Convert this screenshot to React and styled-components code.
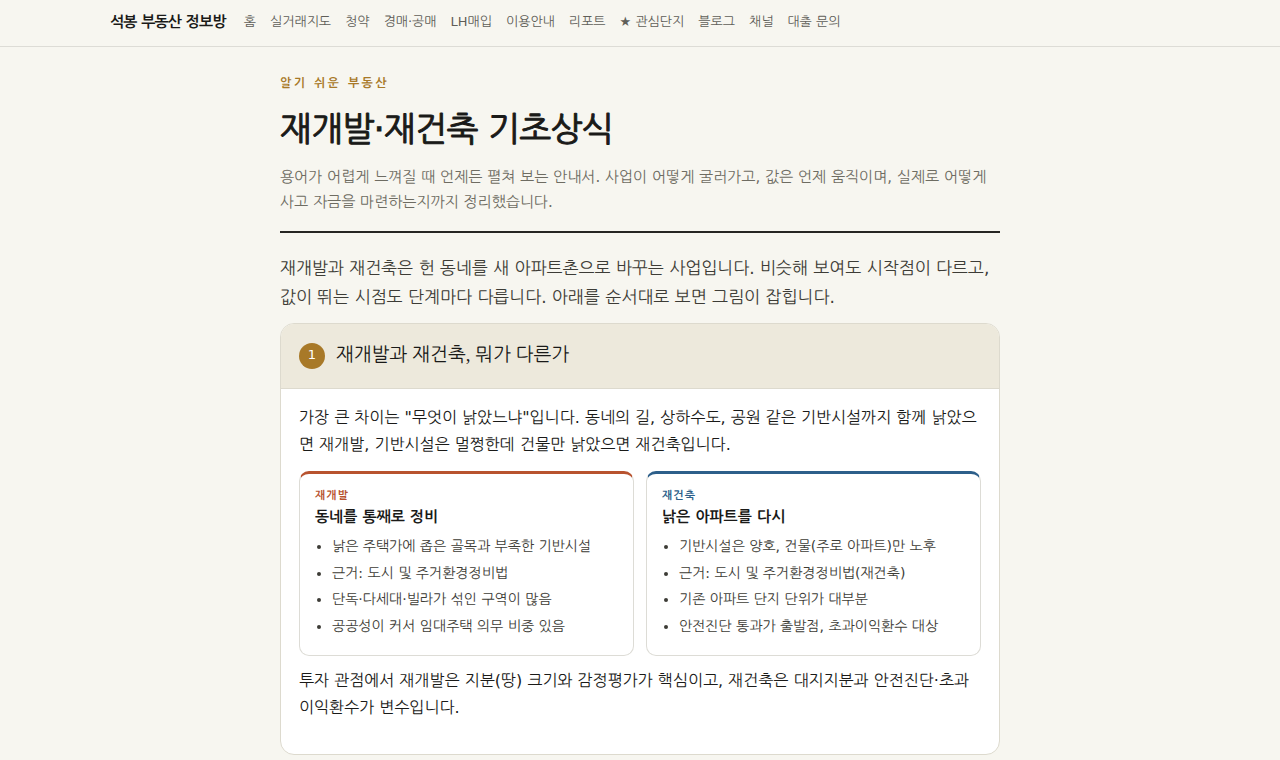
import styled, { createGlobalStyle } from "styled-components";

const links = [
  "홈",
  "실거래지도",
  "청약",
  "경매·공매",
  "LH매입",
  "이용안내",
  "리포트",
  "★ 관심단지",
  "블로그",
  "채널",
  "대출 문의",
];

const types = [
  {
    tag: "재개발",
    color: "#b8532f",
    title: "동네를 통째로 정비",
    items: [
      "낡은 주택가에 좁은 골목과 부족한 기반시설",
      "근거: 도시 및 주거환경정비법",
      "단독·다세대·빌라가 섞인 구역이 많음",
      "공공성이 커서 임대주택 의무 비중 있음",
    ],
  },
  {
    tag: "재건축",
    color: "#2d5f8a",
    title: "낡은 아파트를 다시",
    items: [
      "기반시설은 양호, 건물(주로 아파트)만 노후",
      "근거: 도시 및 주거환경정비법(재건축)",
      "기존 아파트 단지 단위가 대부분",
      "안전진단 통과가 출발점, 초과이익환수 대상",
    ],
  },
];

function TypeBox({ tag, color, title, items }) {
  return (
    <Box $color={color}>
      <Tag $color={color}>{tag}</Tag>
      <BoxTitle>{title}</BoxTitle>
      <List>
        {items.map((item) => (
          <li key={item}>{item}</li>
        ))}
      </List>
    </Box>
  );
}

function App() {
  return (
    <>
      <GlobalStyle />
      <Header>
        <Nav>
          <Brand href="#">석봉 부동산 정보방</Brand>
          {links.map((link) => (
            <NavLink href="#" key={link}>
              {link}
            </NavLink>
          ))}
        </Nav>
      </Header>
      <Main>
        <Hero>
          <Eyebrow>알기 쉬운 부동산</Eyebrow>
          <Title>재개발·재건축 기초상식</Title>
          <Subtitle>
            용어가 어렵게 느껴질 때 언제든 펼쳐 보는 안내서. 사업이 어떻게
            굴러가고, 값은 언제 움직이며, 실제로 어떻게 사고 자금을
            마련하는지까지 정리했습니다.
          </Subtitle>
        </Hero>
        <Lead>
          재개발과 재건축은 헌 동네를 새 아파트촌으로 바꾸는 사업입니다. 비슷해
          보여도 시작점이 다르고, 값이 뛰는 시점도 단계마다 다릅니다. 아래를
          순서대로 보면 그림이 잡힙니다.
        </Lead>
        <Card>
          <CardHead>
            <Number>1</Number>
            <CardTitle>재개발과 재건축, 뭐가 다른가</CardTitle>
          </CardHead>
          <CardBody>
            <Text>
              가장 큰 차이는 "무엇이 낡았느냐"입니다. 동네의 길, 상하수도, 공원
              같은 기반시설까지 함께 낡았으면 재개발, 기반시설은 멀쩡한데 건물만
              낡았으면 재건축입니다.
            </Text>
            <Grid>
              {types.map((type) => (
                <TypeBox key={type.tag} {...type} />
              ))}
            </Grid>
            <Text>
              투자 관점에서 재개발은 지분(땅) 크기와 감정평가가 핵심이고,
              재건축은 대지지분과 안전진단·초과이익환수가 변수입니다.
            </Text>
          </CardBody>
        </Card>
      </Main>
    </>
  );
}

const GlobalStyle = createGlobalStyle`
  * {
    box-sizing: border-box;
    margin: 0;
    padding: 0;
  }

  body {
    background: #f7f6f0;
    color: #1a1a18;
    font-family: "DejaVu Sans", "NanumGothic", "Noto Sans CJK KR", sans-serif;
    font-size: 16px;
    line-height: 27px;
  }
`;

const Header = styled.header`
  border-bottom: 1px solid #dddcd6;
`;

const Nav = styled.nav`
  display: flex;
  flex-wrap: wrap;
  align-items: center;
  gap: 4px 14px;
  max-width: 1100px;
  margin: 0 auto;
  padding: 10px 20px 11px;
`;

const Brand = styled.a`
  margin-right: 4px;
  color: #1a1a18;
  font-size: 15px;
  line-height: 25px;
  font-weight: 700;
  letter-spacing: -0.05em;
  text-decoration: none;
`;

const NavLink = styled.a`
  padding-bottom: 2px;
  color: #5f5e58;
  font-size: 13px;
  line-height: 22px;
  text-decoration: none;
`;

const Main = styled.main`
  max-width: 760px;
  margin: 0 auto;
  padding: 24px 20px 60px;
`;

const Hero = styled.div`
  padding-bottom: 16px;
  border-bottom: 2px solid #262623;
`;

const Eyebrow = styled.p`
  color: #a87928;
  font-size: 12px;
  line-height: 24px;
  font-weight: 700;
  letter-spacing: 0.2em;
`;

const Title = styled.h1`
  margin: 9px 0 11px;
  font-size: 34px;
  line-height: 50px;
  font-weight: 400;
  letter-spacing: -0.02em;
  -webkit-text-stroke: 1px currentColor;
`;

const Subtitle = styled.p`
  color: #6e6c62;
  font-size: 15px;
  line-height: 25px;
`;

const Lead = styled.p`
  margin: 21px 0 11px;
  color: #3d3c36;
  font-size: 17px;
  line-height: 29px;
`;

const Card = styled.section`
  overflow: hidden;
  background: #fff;
  border: 1px solid #dddace;
  border-radius: 14px;
`;

const CardHead = styled.div`
  display: flex;
  align-items: center;
  gap: 11px;
  padding: 16px 18px;
  background: #ede9dc;
  border-bottom: 1px solid #dddace;
`;

const Number = styled.span`
  display: flex;
  align-items: center;
  justify-content: center;
  flex-shrink: 0;
  width: 26px;
  height: 26px;
  padding-bottom: 3px;
  border-radius: 50%;
  background: #a87928;
  color: #fff;
  font-size: 13px;
`;

const CardTitle = styled.h2`
  padding-bottom: 2px;
  font-family: "Liberation Serif", "NanumGothic", "Noto Sans CJK KR", serif;
  font-size: 19px;
  line-height: 30px;
  font-weight: 400;
`;

const CardBody = styled.div`
  padding: 15px 18px 33px;
`;

const Text = styled.p`
  font-size: 16px;
  line-height: 27px;
`;

const Grid = styled.div`
  display: grid;
  grid-template-columns: repeat(auto-fit, minmax(260px, 1fr));
  gap: 12px;
  margin: 13px 0 11px;
`;

const Box = styled.div`
  padding: 13px 15px 16px;
  border: 1px solid #dddcd6;
  border-top: 3px solid ${({ $color }) => $color};
  border-radius: 10px;
`;

const Tag = styled.p`
  color: ${({ $color }) => $color};
  font-size: 11px;
  line-height: 18px;
  font-weight: 700;
  letter-spacing: 1px;
`;

const BoxTitle = styled.h3`
  font-size: 15px;
  line-height: 25px;
  margin-bottom: 3px;
`;

const List = styled.ul`
  padding-left: 17px;
  color: #3d3c36;
  font-size: 14px;
  line-height: 1.9;
`;

export default App;
